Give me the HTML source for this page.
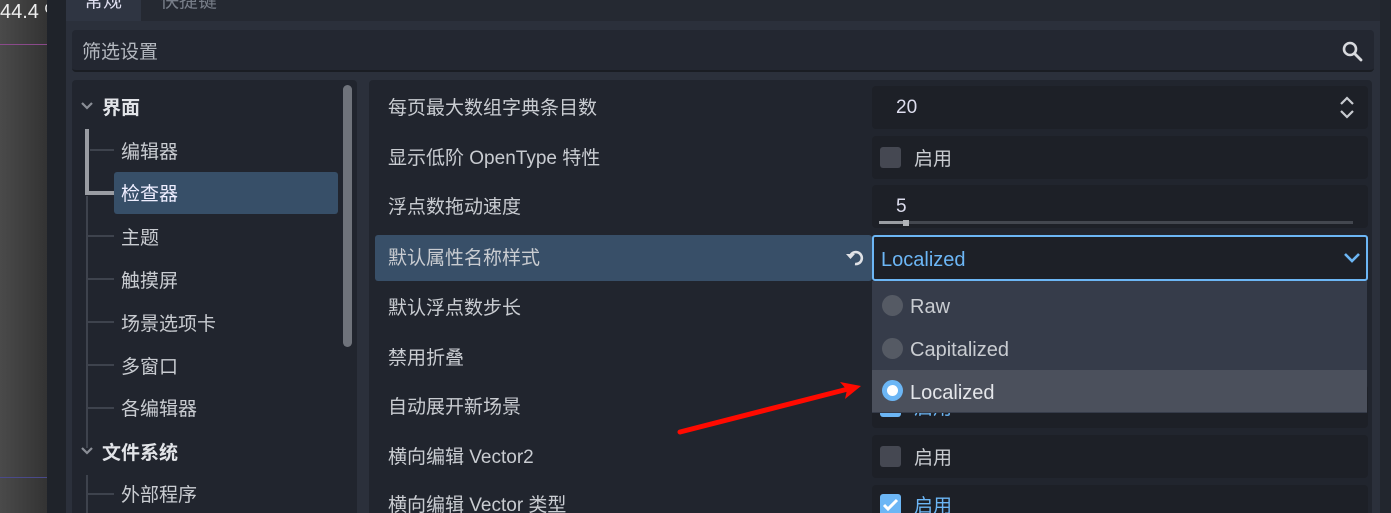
<!DOCTYPE html>
<html style="width:1391px;height:513px;overflow:hidden"><head><meta charset="utf-8"><style>
*{margin:0;padding:0;box-sizing:border-box}
body{width:1391px;height:513px;overflow:hidden;background:#2b303b;position:relative;font-family:"Liberation Sans","Noto Sans CJK SC",sans-serif;color:#c9ccd1;font-size:19px}
.a{position:absolute}
.t{position:absolute;white-space:nowrap;line-height:24px;margin-top:2px}
.vb{position:absolute;left:872px;width:496px;height:43px;background:#1d2027;border-radius:4px}
.cb{position:absolute;left:880px;width:21px;height:21px;border-radius:3px;background:#454852}
.tl{position:absolute;background:#3e434d}
</style></head><body>
<div class="a" style="left:0;top:0;width:47px;height:513px;background:linear-gradient(90deg,#4a4a4a,#333)"></div>
<div class="t" style="left:0;top:-2px;color:#eee;font-size:20px">44.4 %</div>
<div class="a" style="left:0;top:44px;width:47px;height:1px;background:#8a4a8a"></div>
<div class="a" style="left:0;top:477px;width:47px;height:1px;background:#4a4a8a"></div>
<div class="a" style="left:47px;top:0;width:19px;height:513px;background:#1f232a"></div>
<div class="a" style="left:1380px;top:0;width:11px;height:513px;background:#22262e"></div>
<div class="a" style="left:66px;top:0;width:75px;height:21px;background:#2f3542"></div>
<div class="a" style="left:141px;top:0;width:1239px;height:21px;background:#252932"></div>
<div class="t" style="left:84px;top:-12px;color:#dde">常规</div>
<div class="t" style="left:160px;top:-12px;color:#777d88">快捷键</div>
<div class="a" style="left:72px;top:30px;width:1302px;height:42px;background:#232731;border-radius:4px;border-bottom:2px solid #1a1d23"></div>
<div class="t" style="left:82px;top:39px;color:#b4b8bf">筛选设置</div>
<svg class="a" style="left:1341px;top:40px" width="22" height="22"><circle cx="9" cy="9" r="6" fill="none" stroke="#d8dade" stroke-width="2.6"/><line x1="13.5" y1="13.5" x2="20" y2="20" stroke="#d8dade" stroke-width="2.8" stroke-linecap="round"/></svg>
<div class="a" style="left:72px;top:80px;width:285px;height:433px;background:#21252e;border-radius:4px 4px 0 0"></div>
<div class="a" style="left:343px;top:85px;width:9px;height:262px;background:#6f737b;border-radius:5px"></div>
<svg class="a" style="left:80px;top:100px" width="14" height="12"><path d="M2 3l5 5 5-5" fill="none" stroke="#8a8e96" stroke-width="2.2"/></svg>
<div class="t" style="left:102px;top:95px;font-weight:bold;color:#e2e4e8">界面</div>
<div class="a" style="left:85px;top:129px;width:4px;height:66px;background:#9a9da3"></div>
<div class="a" style="left:85px;top:191px;width:30px;height:4px;background:#9a9da3"></div>
<div class="tl" style="left:90px;top:149px;width:24px;height:2px"></div>
<div class="tl" style="left:86px;top:196px;width:2px;height:252px"></div>
<div class="tl" style="left:86px;top:235px;width:28px;height:2px"></div>
<div class="tl" style="left:86px;top:278px;width:28px;height:2px"></div>
<div class="tl" style="left:86px;top:321px;width:28px;height:2px"></div>
<div class="tl" style="left:86px;top:364px;width:28px;height:2px"></div>
<div class="tl" style="left:86px;top:407px;width:28px;height:2px"></div>
<div class="a" style="left:114px;top:172px;width:224px;height:42px;background:#374f68;border-radius:3px"></div>
<div class="t" style="left:121px;top:139px">编辑器</div>
<div class="t" style="left:121px;top:181px;color:#eef">检查器</div>
<div class="t" style="left:121px;top:225px">主题</div>
<div class="t" style="left:121px;top:268px">触摸屏</div>
<div class="t" style="left:121px;top:311px">场景选项卡</div>
<div class="t" style="left:121px;top:354px">多窗口</div>
<div class="t" style="left:121px;top:396px">各编辑器</div>
<svg class="a" style="left:80px;top:445px" width="14" height="12"><path d="M2 3l5 5 5-5" fill="none" stroke="#8a8e96" stroke-width="2.2"/></svg>
<div class="t" style="left:102px;top:440px;font-weight:bold;color:#e2e4e8">文件系统</div>
<div class="tl" style="left:86px;top:475px;width:2px;height:40px"></div>
<div class="tl" style="left:86px;top:493px;width:28px;height:2px"></div>
<div class="t" style="left:121px;top:482px">外部程序</div>
<div class="a" style="left:369px;top:80px;width:1003px;height:433px;background:#21252e;border-radius:4px 4px 0 0"></div>
<div class="a" style="left:375px;top:235px;width:497px;height:46px;background:#384f68;border-radius:3px"></div>
<div class="t" style="left:388px;top:95px">每页最大数组字典条目数</div>
<div class="t" style="left:388px;top:145px">显示低阶 OpenType 特性</div>
<div class="t" style="left:388px;top:194px">浮点数拖动速度</div>
<div class="t" style="left:388px;top:245px">默认属性名称样式</div>
<div class="t" style="left:388px;top:295px">默认浮点数步长</div>
<div class="t" style="left:388px;top:345px">禁用折叠</div>
<div class="t" style="left:388px;top:394px">自动展开新场景</div>
<div class="t" style="left:388px;top:444px">横向编辑 Vector2</div>
<div class="t" style="left:388px;top:492px">横向编辑 Vector 类型</div>
<svg class="a" style="left:844px;top:247px" width="22" height="22"><path d="M7 7.5A6 6 0 1 1 11 17" fill="none" stroke="#e0e2e6" stroke-width="2.6"/><path d="M2 7h9l-4.5 5z" fill="#e0e2e6"/></svg>
<div class="vb" style="top:86px"></div>
<div class="t" style="left:896px;top:94px;color:#dde">20</div>
<svg class="a" style="left:1338px;top:96px" width="18" height="24"><path d="M3 8l6-6 6 6M3 15l6 6 6-6" fill="none" stroke="#c8cbd0" stroke-width="2.2"/></svg>
<div class="vb" style="top:136px"></div>
<div class="cb" style="top:147px"></div>
<div class="t" style="left:914px;top:146px">启用</div>
<div class="vb" style="top:185px"></div>
<div class="t" style="left:896px;top:193px;color:#dde">5</div>
<div class="a" style="left:879px;top:221px;width:474px;height:3px;background:#43474f"></div>
<div class="a" style="left:879px;top:221px;width:26px;height:3px;background:#9a9da3"></div>
<div class="a" style="left:903px;top:220px;width:6px;height:6px;background:#b0b3b8"></div>
<div class="a" style="left:872px;top:235px;width:496px;height:46px;background:#1d2027;border:2px solid #6cb6f5;border-radius:3px"></div>
<div class="t" style="left:881px;top:246px;color:#6cb6f5;font-size:20px">Localized</div>
<svg class="a" style="left:1343px;top:251px" width="18" height="14"><path d="M2 3l7 7 7-7" fill="none" stroke="#6cb6f5" stroke-width="2.6"/></svg>
<div class="vb" style="top:385px"></div>
<div class="a" style="left:880px;top:396px;width:21px;height:21px;border-radius:3px;background:#6cb6f5"></div>
<div class="t" style="left:914px;top:395px;color:#6cb6f5">启用</div>
<div class="vb" style="top:435px"></div>
<div class="cb" style="top:446px"></div>
<div class="t" style="left:914px;top:445px">启用</div>
<div class="vb" style="top:485px;height:28px;border-radius:4px 4px 0 0"></div>
<div class="a" style="left:880px;top:494px;width:21px;height:19px;border-radius:3px 3px 0 0;background:#6cb6f5"></div>
<svg class="a" style="left:880px;top:494px" width="21" height="19"><path d="M4 11l4 4 9-9" fill="none" stroke="#fff" stroke-width="3"/></svg>
<div class="t" style="left:914px;top:493px;color:#6cb6f5">启用</div>
<div class="a" style="left:872px;top:281px;width:495px;height:132px;background:#363c4a"></div>
<div class="a" style="left:872px;top:370px;width:495px;height:42px;background:#4b505c"></div>
<div class="a" style="left:882px;top:295px;width:21px;height:21px;border-radius:50%;background:#555a64"></div>
<div class="a" style="left:882px;top:338px;width:21px;height:21px;border-radius:50%;background:#555a64"></div>
<div class="a" style="left:882px;top:380px;width:21px;height:21px;border-radius:50%;background:#6cb6f5"></div>
<div class="a" style="left:887px;top:385px;width:11px;height:11px;border-radius:50%;background:#fff"></div>
<div class="t" style="left:910px;top:293px;font-size:20px">Raw</div>
<div class="t" style="left:910px;top:336px;font-size:20px">Capitalized</div>
<div class="t" style="left:910px;top:379px;font-size:20px;color:#e4e6ea">Localized</div>
<svg class="a" style="left:0;top:0" width="1391" height="513"><line x1="680" y1="432" x2="848" y2="389" stroke="#ff0a00" stroke-width="5" stroke-linecap="round"/><path d="M840 382L861 386L845 399L847 390z" fill="#ff0a00"/></svg>
</body></html>
